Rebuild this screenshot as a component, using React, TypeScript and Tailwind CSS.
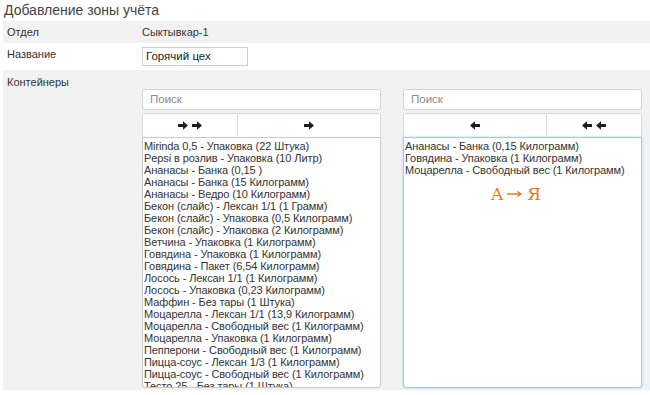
import React from "react";

const left = [
  "Mirinda 0,5 - Упаковка (22 Штука)",
  "Pepsi в розлив - Упаковка (10 Литр)",
  "Ананасы - Банка (0,15 )",
  "Ананасы - Банка (15 Килограмм)",
  "Ананасы - Ведро (10 Килограмм)",
  "Бекон (слайс) - Лексан 1/1 (1 Грамм)",
  "Бекон (слайс) - Упаковка (0,5 Килограмм)",
  "Бекон (слайс) - Упаковка (2 Килограмм)",
  "Ветчина - Упаковка (1 Килограмм)",
  "Говядина - Упаковка (1 Килограмм)",
  "Говядина - Пакет (6,54 Килограмм)",
  "Лосось - Лексан 1/1 (1 Килограмм)",
  "Лосось - Упаковка (0,23 Килограмм)",
  "Маффин - Без тары (1 Штука)",
  "Моцарелла - Лексан 1/1 (13,9 Килограмм)",
  "Моцарелла - Свободный вес (1 Килограмм)",
  "Моцарелла - Упаковка (1 Килограмм)",
  "Пепперони - Свободный вес (1 Килограмм)",
  "Пицца-соус - Лексан 1/3 (1 Килограмм)",
  "Пицца-соус - Свободный вес (1 Килограмм)",
  "Тесто 25 - Без тары (1 Штука)",
];

const right = [
  "Ананасы - Банка (0,15 Килограмм)",
  "Говядина - Упаковка (1 Килограмм)",
  "Моцарелла - Свободный вес (1 Килограмм)",
];

function Arrow({ dir }: { dir: "left" | "right" }) {
  return (
    <svg width="10" height="9" viewBox="0 0 10 9" className={dir === "left" ? "rotate-180" : ""}>
      <path d="M0 3H5V0.3L10 4.5L5 8.7V6H0Z" fill="#1e1e1e" />
    </svg>
  );
}

function Search() {
  return (
    <div className="flex h-[21px] items-center rounded-[3px] border border-[#d4d4d4] bg-white pl-[7px] text-[11.5px] text-[#8a8a8a]">
      Поиск
    </div>
  );
}

function Btn({ children, className }: { children: React.ReactNode; className: string }) {
  return (
    <div className={"flex h-[23px] items-center justify-center gap-[4px] border-[#dadada] bg-white " + className}>
      {children}
    </div>
  );
}

export default function App() {
  return (
    <div className="h-[395px] w-[650px] overflow-hidden bg-white text-[#333] [font-family:'Liberation_Sans',Arial,sans-serif]">
      <div className="h-[21px] pl-[4px] pt-[1px] text-[14px] leading-[18px] text-[#444]">Добавление зоны учёта</div>

      <div className="ml-[3px] flex h-[22px] items-center bg-[#f2f2f2] text-[11px]">
        <div className="w-[139px] pl-[4px]">Отдел</div>
        <div>Сыктывкар-1</div>
      </div>

      <div className="ml-[3px] flex h-[27px] items-center text-[11px]">
        <div className="w-[139px] pl-[4px] pb-[4px]">Название</div>
        <div className="flex h-[19px] w-[106px] items-center border border-[#cfcfcf] bg-white pl-[3px] text-[11.5px] text-[#222]">
          Горячий цех
        </div>
      </div>

      <div className="ml-[3px] flex h-[320px] bg-[#f2f2f2] text-[11px]">
        <div className="w-[139px] pl-[4px] pt-[4px]">Контейнеры</div>
        <div className="flex gap-[22px] pt-[19px]">
          <div className="flex w-[239px] flex-col">
            <Search />
            <div className="mt-[3px] flex rounded-t-[3px] border border-b-0 border-[#dadada] bg-white">
              <Btn className="w-[95px] border-r">
                <Arrow dir="right" />
                <Arrow dir="right" />
              </Btn>
              <Btn className="flex-1">
                <Arrow dir="right" />
              </Btn>
            </div>
            <div className="h-[251px] overflow-hidden rounded-b-[3px] border border-[#c8c8c8] bg-white pl-[1px] pt-[2px] text-[11px] leading-[12px] tracking-[-0.1px] text-[#333]">
              {left.map((t) => (
                <div key={t} className="whitespace-nowrap">{t}</div>
              ))}
            </div>
          </div>

          <div className="flex w-[239px] flex-col">
            <Search />
            <div className="mt-[3px] flex rounded-t-[3px] border border-b-0 border-[#dadada] bg-white">
              <Btn className="w-[143px] border-r">
                <Arrow dir="left" />
              </Btn>
              <Btn className="flex-1">
                <Arrow dir="left" />
                <Arrow dir="left" />
              </Btn>
            </div>
            <div className="h-[251px] overflow-hidden rounded-b-[3px] border border-[#9ccaf2] bg-white pl-[1px] pt-[2px] text-[11px] leading-[12px] tracking-[-0.1px] text-[#333] shadow-[0_0_3px_#b5d8f7]">
              {right.map((t) => (
                <div key={t} className="whitespace-nowrap">{t}</div>
              ))}
              <div className="mt-[8px] flex items-center justify-center gap-[4px] pr-[14px] text-[17px] leading-[20px] tracking-normal text-[#e87722] [font-family:'DejaVu_Serif',serif]">
                <span>A</span>
                <svg width="16" height="8" viewBox="0 0 16 8">
                  <path d="M0 4H14M10.5 1.5L14 4L10.5 6.5" stroke="#e87722" strokeWidth="1.3" fill="none" />
                </svg>
                <span>Я</span>
              </div>
            </div>
          </div>
        </div>
      </div>
    </div>
  );
}
